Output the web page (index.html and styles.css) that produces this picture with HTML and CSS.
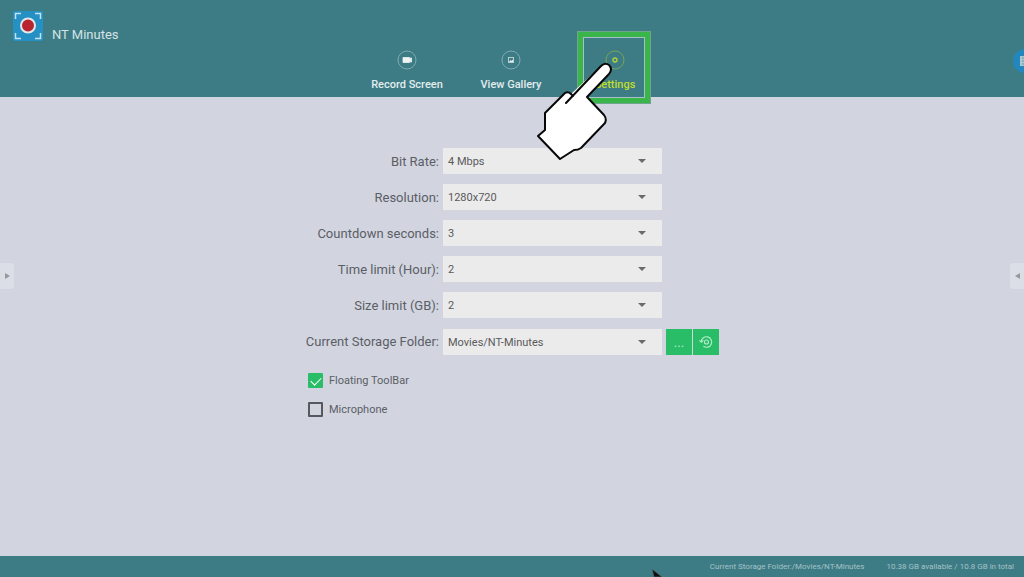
FILE: index.html
```html
<!DOCTYPE html>
<html lang="en">
<head>
    <title>NT Minutes</title>
    <meta charset="utf-8">
    <meta name="viewport" content="width=device-width, initial-scale=1">
    <link rel="stylesheet" href="styles.css">
</head>
<body>
    <header class="header">
        <div class="brand">
            <svg class="logo" viewBox="0 0 30 30">
                <rect width="30" height="30" rx="2" fill="#2490c4"/>
                <path d="M2.500 8V2.500H8M22 2.500h5.500V8M27.500 22v5.500H22M8 27.500H2.500V22" fill="none" stroke="#c5e3ef" stroke-width="1.500"/>
                <circle cx="15" cy="14.500" r="7" fill="#b8242f" stroke="#e3e8ea" stroke-width="2"/>
            </svg>
            <span class="title">NT Minutes</span>
        </div>
        <nav class="tabs">
            <button class="tab">
                <svg class="tab-icon" viewBox="0 0 20 20">
                    <circle cx="10" cy="10" r="9" fill="none" stroke="#7fabb1"/>
                    <path d="M6 7.500h6.500v1l2-.6v4.200l-2-.6v1H6z" fill="#eef4f4" stroke="#eef4f4" stroke-width=".8" stroke-linejoin="round"/>
                </svg>
                Record Screen
            </button>
            <button class="tab">
                <svg class="tab-icon" viewBox="0 0 20 20">
                    <circle cx="10" cy="10" r="9" fill="none" stroke="#7fabb1"/>
                    <rect x="7.500" y="7.500" width="5" height="5" fill="none" stroke="#b5ced1"/>
                    <path d="M8 12l1.500-2 1 1 1-1.500 1 2.500z" fill="#e6eeee"/>
                </svg>
                View Gallery
            </button>
            <button class="tab active">
                <svg class="tab-icon" viewBox="0 0 20 20">
                    <circle cx="10" cy="10" r="9" fill="none" stroke="#76a65a"/>
                    <circle cx="10" cy="10" r="2" fill="none" stroke="#b5d433" stroke-width="1.300"/>
                </svg>
                Settings
                <span class="frame"></span>
                <svg class="hand" viewBox="0 0 78 100">
                    <path d="M35 33L65 5Q69 1 73 4Q77 8 73 13L51 36L68 54Q71 58 69 62L45 87Q42 89 38 89L24 98L2 75L9 69L9 52L29 32Q32 30 35 33Z" fill="#fff"/>
                    <path d="M30 42L65 5Q69 1 73 4Q77 8 73 13L51 36L68 54Q71 58 69 62L45 87Q42 89 38 89L24 98L2 75L9 69L9 52L29 32Q32 30 35 33L37 35" fill="none" stroke="#080808" stroke-width="2" stroke-linejoin="round" stroke-linecap="round"/>
                </svg>
            </button>
        </nav>
        <button class="bubble" aria-label="Toolbar">
            <svg viewBox="0 0 24 24">
                <circle cx="12" cy="12" r="12" fill="#2387be"/>
                <path d="M7 7h10v10H7z" fill="#a9c9cf"/>
                <path d="M9 9h3M9 12h3M9 15h3" stroke="#5c9cb8"/>
            </svg>
        </button>
    </header>

    <main class="main">
        <button class="drawer left" aria-label="Open left toolbar"></button>
        <form class="form">
            <div class="grid">
                <label for="bitrate">Bit Rate:</label>
                <div class="pick"><select id="bitrate"><option>4 Mbps</option></select></div>

                <label for="resolution">Resolution:</label>
                <div class="pick"><select id="resolution"><option>1280x720</option></select></div>

                <label for="countdown">Countdown seconds:</label>
                <div class="pick"><select id="countdown"><option>3</option></select></div>

                <label for="time">Time limit (Hour):</label>
                <div class="pick"><select id="time"><option>2</option></select></div>

                <label for="size">Size limit (GB):</label>
                <div class="pick"><select id="size"><option>2</option></select></div>
            </div>
            <div class="grid folder">
                <label for="folder">Current Storage Folder:</label>
                <div class="pick"><select id="folder"><option>Movies/NT-Minutes</option></select></div>
                <div class="actions">
                    <button type="button" class="square">...</button>
                    <button type="button" class="square" aria-label="Reset folder">
                        <svg viewBox="0 0 16 16" fill="none" stroke="#b5ecc9" stroke-width="1.300">
                            <path d="M2.500 8A6 6 0 1 1 5 12.900M.5 6l2 2.300L5 6.200"/>
                            <circle cx="8.500" cy="8" r="2.300"/>
                        </svg>
                    </button>
                </div>
            </div>
            <label class="check"><input type="checkbox" checked>Floating ToolBar</label>
            <label class="check"><input type="checkbox">Microphone</label>
        </form>
        <button class="drawer right" aria-label="Open right toolbar"></button>
    </main>

    <footer class="footer">
        <span>Current Storage Folder:/Movies/NT-Minutes</span>
        <span>10.38 GB available / 10.8 GB in total</span>
        <svg class="cursor" viewBox="0 0 12 8">
            <path d="M1 0L11 8H3Z" fill="#111" stroke="#5a6b70" stroke-width=".6"/>
        </svg>
    </footer>
</body>
</html>
```

FILE: styles.css
```css
*{
    box-sizing: border-box;
}
body{
    margin: 0;
    min-height: 100vh;
    display: flex;
    flex-direction: column;
    font-family: Roboto, "Liberation Sans", sans-serif;
    background: #d2d5e0;
    color: #5b5e66;
    overflow: hidden;
}
button{
    border: none;
    padding: 0;
    background: none;
    font-family: inherit;
    cursor: pointer;
}
.header{
    position: relative;
    display: grid;
    grid-template-columns: 1fr auto 1fr;
    height: 97px;
    padding-right: 2px;
    background: #3e7c85;
}
.brand{
    display: flex;
    align-items: flex-start;
    gap: 9px;
    padding: 11px 0 0 13px;
}
.logo{
    width: 30px;
    height: 30px;
}
.title{
    padding-top: 16px;
    font-size: 13px;
    line-height: 16px;
    color: #d5e3e5;
}
.tabs{
    display: flex;
    padding-top: 50px;
}
.tab{
    position: relative;
    display: flex;
    flex-direction: column;
    align-items: center;
    gap: 7px;
    width: 104px;
    font-size: 11px;
    font-weight: 500;
    line-height: 16px;
    color: #e2edee;
}
.tab-icon{
    width: 20px;
    height: 20px;
}
.active{
    color: #bfdc2c;
}
/* highlight round the active tab */
.frame{
    position: absolute;
    top: -19px;
    left: 14px;
    width: 74px;
    height: 73px;
    border: 6px solid #39b54a;
    outline: 1px solid #6fa58d;
    outline-offset: -1px;
    box-shadow: inset 0 0 0 1px #a9bfc8;
}
.hand{
    position: absolute;
    top: 11px;
    left: -27px;
    width: 78px;
    height: 100px;
    z-index: 2;
}
.bubble{
    position: absolute;
    top: 49px;
    right: -13px;
    width: 24px;
    height: 24px;
}
.main{
    flex: 1;
    display: flex;
    justify-content: space-between;
    align-items: flex-start;
}
.form{
    padding: 51px 0 0 3px;
    font-size: 13px;
}
.grid{
    display: grid;
    grid-template-columns: 131px 219px 53px;
    column-gap: 4px;
    row-gap: 10px;
    align-items: center;
}
.grid label{
    padding-top: 2px;
    grid-column: 1;
    justify-self: end;
    line-height: 16px;
    white-space: nowrap;
}
.folder{
    margin-top: 11px;
}
.folder label{
    padding-top: 0;
}
.pick{
    position: relative;
}
.pick::after{
    content: "";
    position: absolute;
    top: 11px;
    right: 16px;
    border: 4px solid transparent;
    border-top: 4px solid #6a6a6a;
    border-bottom: none;
    pointer-events: none;
}
.pick select{
    display: block;
    width: 100%;
    height: 26px;
    padding: 0 5px;
    border: none;
    border-radius: 0;
    appearance: none;
    background: #ebebeb;
    color: #5a5a5c;
    font-family: inherit;
    font-size: 11px;
}
.actions{
    display: flex;
    gap: 1px;
}
.square{
    display: flex;
    align-items: center;
    justify-content: center;
    width: 26px;
    height: 26px;
    background: #2abd68;
    color: #b5ecc9;
    font-size: 13px;
}
.square svg{
    width: 14px;
    height: 14px;
}
.check{
    display: flex;
    align-items: center;
    gap: 6px;
    width: fit-content;
    height: 16px;
    margin-top: 13px;
    font-size: 11px;
}
.folder + .check{
    margin-top: 17px;
}
.check input{
    position: relative;
    width: 15px;
    height: 15px;
    margin: 0;
    border: 2px solid #55585f;
    border-radius: 1px;
    appearance: none;
}
.check input:checked{
    border-color: #2abd68;
    background: #2abd68;
}
.check input:checked::after{
    content: "";
    position: absolute;
    top: 2px;
    left: 1px;
    width: 9px;
    height: 5px;
    border: solid #fff;
    border-width: 0 0 1px 1px;
    transform: rotate(-45deg);
}
.drawer{
    display: flex;
    align-items: center;
    justify-content: center;
    width: 14px;
    height: 26px;
    margin-top: 166px;
    background: #dcdee6;
}
.drawer::before{
    content: "";
    border: 3px solid transparent;
}
.left{
    border-radius: 0 3px 3px 0;
}
.left::before{
    border-left: 5px solid #96989e;
    border-right: none;
}
.right{
    border-radius: 3px 0 0 3px;
}
.right::before{
    border-right: 5px solid #96989e;
    border-left: none;
}
.footer{
    position: relative;
    display: flex;
    align-items: center;
    justify-content: flex-end;
    gap: 22px;
    height: 21px;
    padding-right: 10px;
    background: #3e7c85;
    color: #a5c2c7;
    font-size: 8px;
}
.cursor{
    position: absolute;
    bottom: 0;
    left: 651px;
    width: 12px;
    height: 8px;
}
```
